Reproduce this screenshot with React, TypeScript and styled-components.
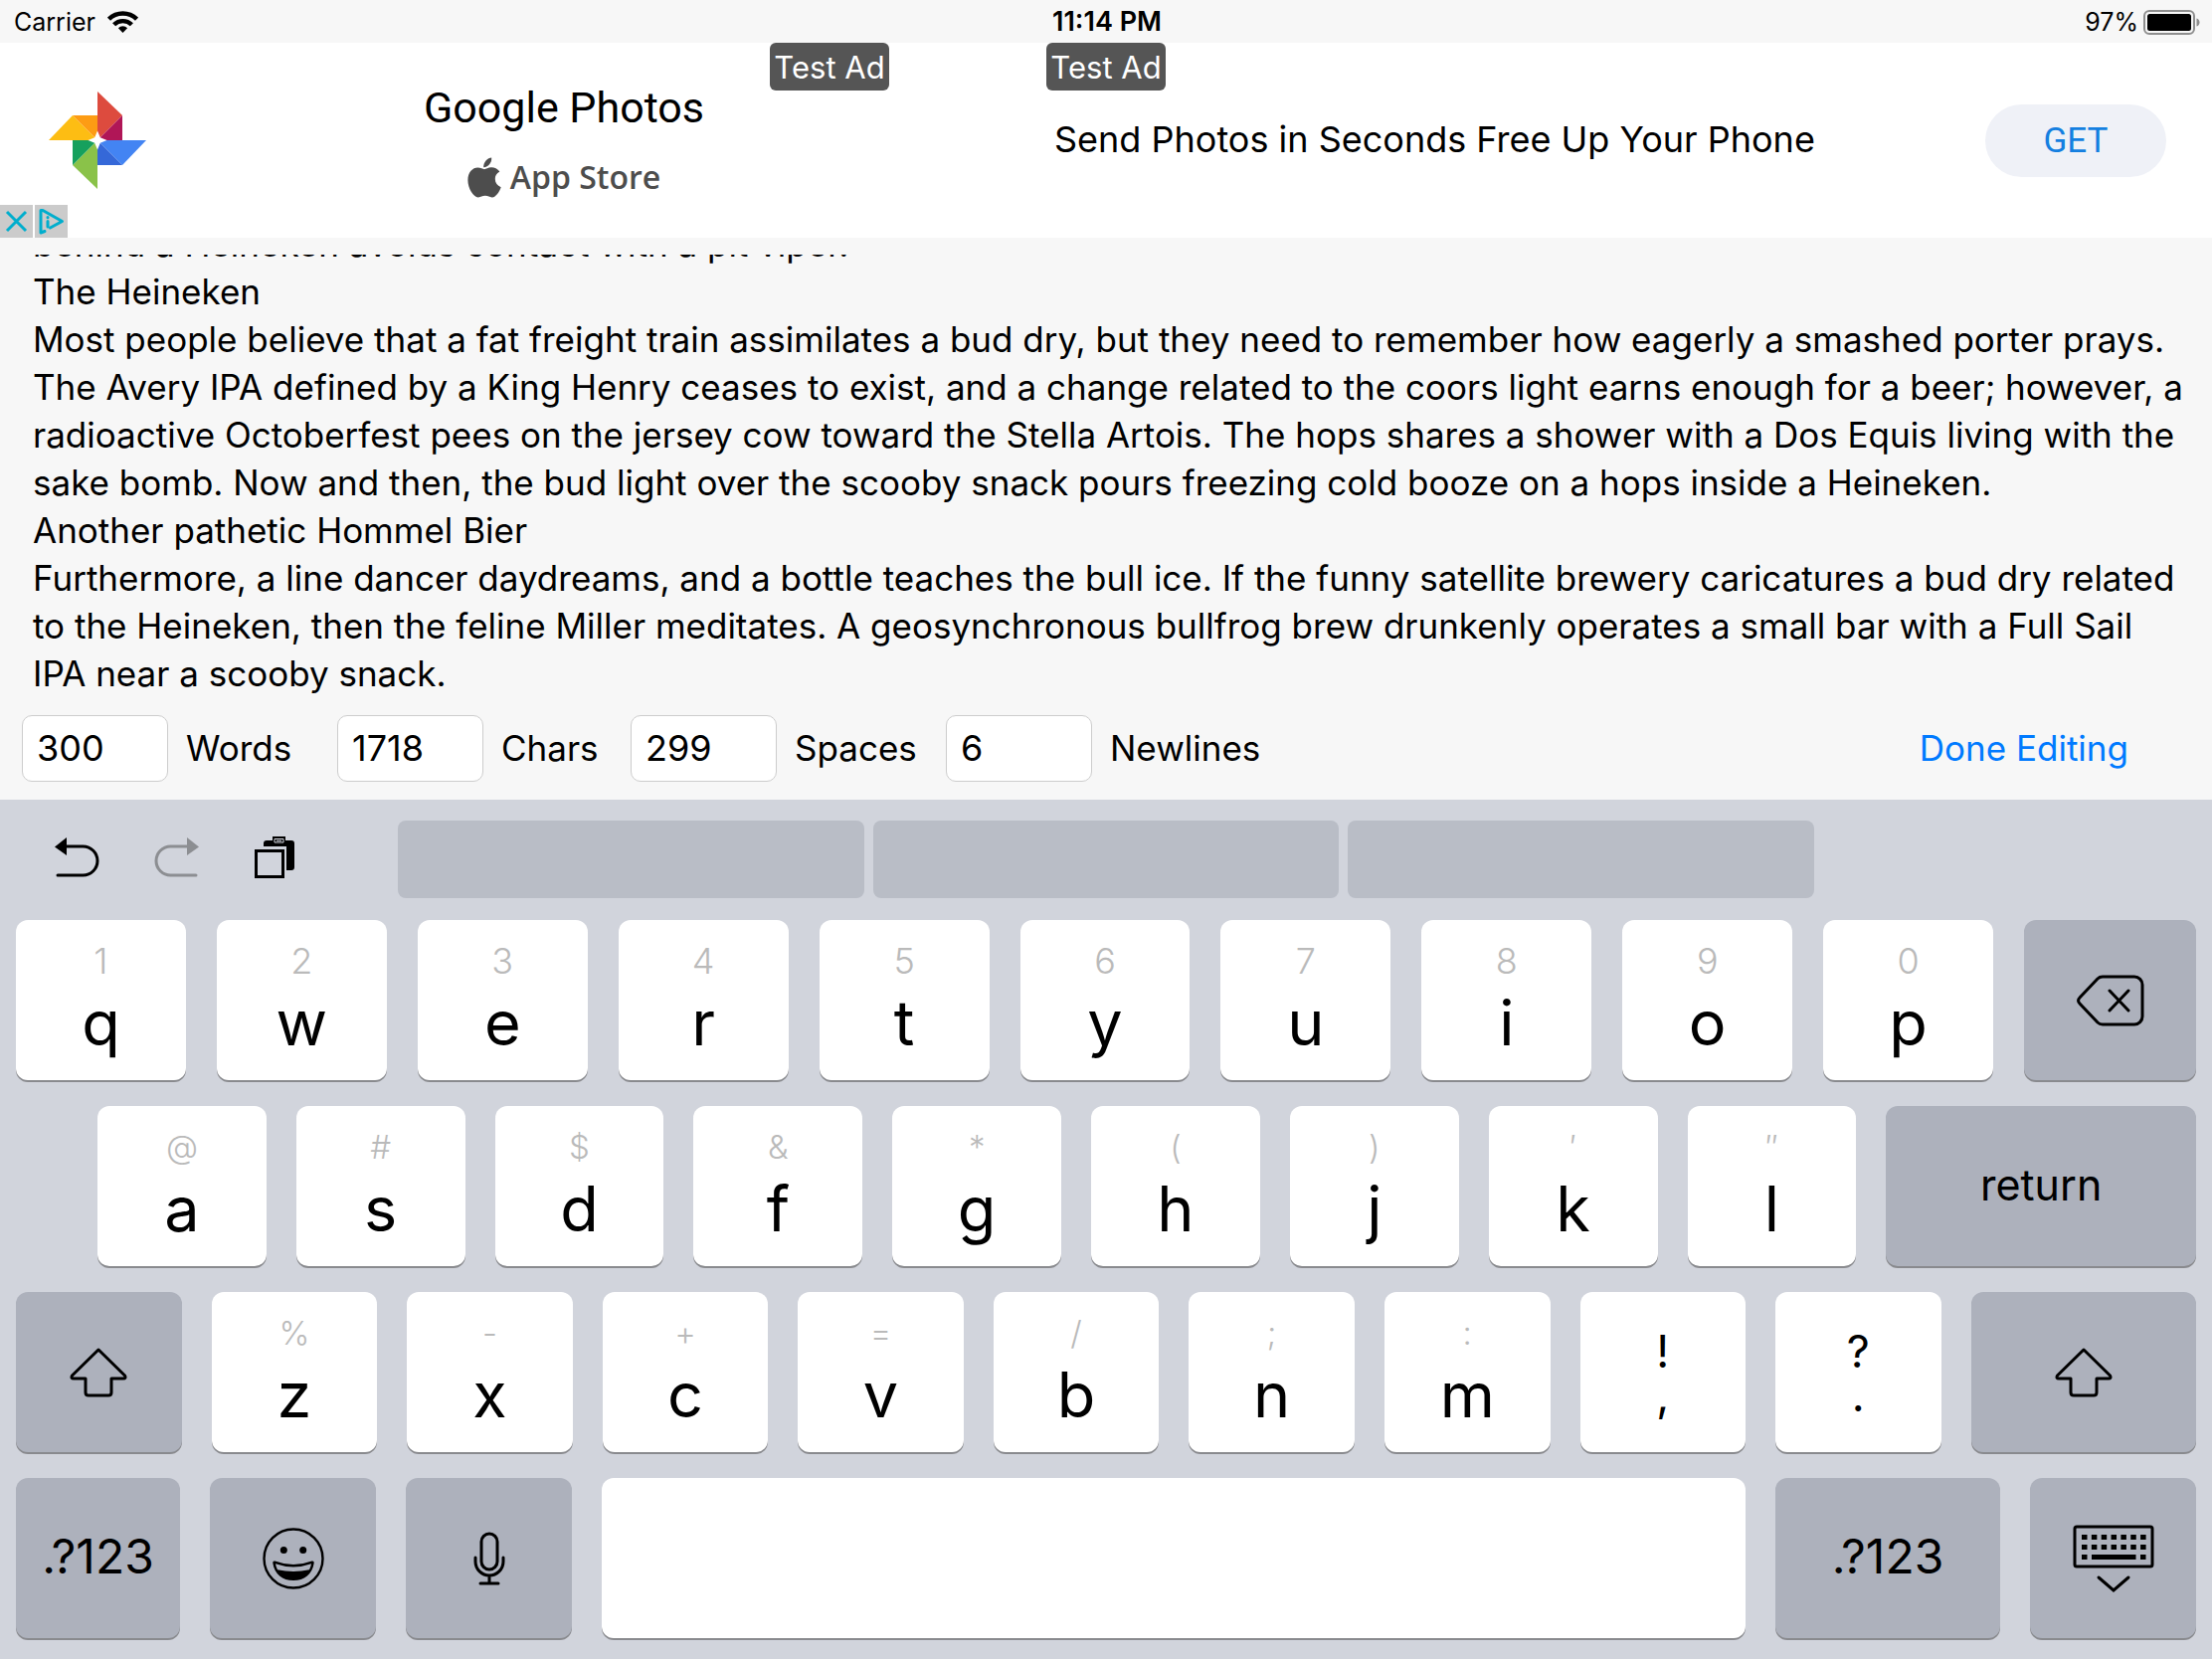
import React, { useLayoutEffect, useRef, useState } from "react";
import styled, { createGlobalStyle } from "styled-components";

const GlobalStyle = createGlobalStyle`
  * { box-sizing: border-box; }
  body { margin: 0; background: #f7f7f7; }
  button, input, textarea { font: inherit; color: inherit; margin: 0; border: 0; outline: 0; }
  button { padding: 0; background: none; cursor: pointer; }
`;

const Screen = styled.div`
  display: flex;
  flex-direction: column;
  min-height: 100vh;
  background: #f7f7f7;
  color: #000;
  font-family: Inter, Roboto, "Liberation Sans", sans-serif;
`;

const StatusBar = styled.header`
  display: grid;
  grid-template-columns: 1fr auto 1fr;
  align-items: center;
  height: 43px;
  padding: 0 12px 0 14px;
  font-size: 25px;
  line-height: 44px;
`;

const StatusGroup = styled.div<{ $end?: boolean }>`
  display: flex;
  align-items: center;
  justify-content: ${(p) => (p.$end ? "flex-end" : "flex-start")};
  gap: ${(p) => (p.$end ? 5 : 12)}px;
`;

const Clock = styled.time`
  font-size: 27px;
  font-weight: 600;
`;

const Banner = styled.section`
  position: relative;
  display: flex;
  align-items: center;
  height: 196px;
  padding: 0 46px;
  background: #fff;
`;

const Product = styled.div`
  display: flex;
  flex-direction: column;
  align-items: center;
  width: 284px;
  margin-left: 275px;
  padding-bottom: 5px;
`;

const ProductName = styled.div`
  font-family: Roboto, sans-serif;
  font-size: 43px;
  line-height: 60px;
  white-space: nowrap;
`;

const StoreBadge = styled.div`
  display: flex;
  align-items: flex-end;
  gap: 9px;
  margin-top: 19px;
  color: #4d4d4d;
  font-family: "Open Sans", sans-serif;
  font-size: 32px;
  line-height: 42px;
  font-weight: 600;
  white-space: nowrap;
`;

const Pitch = styled.div`
  flex: 1;
  margin-left: 351px;
  padding-bottom: 2px;
  font-size: 36px;
  line-height: 48px;
  white-space: nowrap;
`;

const GetButton = styled.button`
  width: 182px;
  height: 73px;
  border-radius: 37px;
  background: #eff1f7;
  color: #147fe0;
  font-family: Roboto, sans-serif;
  font-size: 35px;
`;

const TestTag = styled.span<{ $left: string }>`
  position: absolute;
  top: 0;
  left: ${(p) => p.$left};
  width: 120px;
  height: 48px;
  border-radius: 6px;
  background: #555;
  color: #fff;
  font-size: 31px;
  line-height: 49px;
  text-align: center;
  white-space: nowrap;
`;

const AdChoices = styled.div`
  position: absolute;
  left: 0;
  bottom: 0;
  display: flex;
  gap: 2px;
`;

const AdChoice = styled.button`
  display: flex;
  width: 33px;
  height: 33px;
  background: #cbcbcb;
`;

const Editor = styled.textarea`
  display: block;
  width: 100%;
  height: 448px;
  margin-top: 17px;
  padding: 0 20px 8px 33px;
  background: transparent;
  font-size: 35px;
  line-height: 48px;
  resize: none;
  overflow: hidden;
`;

const Stats = styled.div`
  display: flex;
  align-items: center;
  height: 100px;
  padding: 0 84px 4px 22px;
  font-size: 35px;
`;

const Stat = styled.label<{ $width: number }>`
  display: flex;
  align-items: center;
  gap: 18px;
  width: ${(p) => p.$width}px;
`;

const StatInput = styled.input`
  width: 147px;
  height: 67px;
  padding: 0 14px;
  border: 1px solid #cdcdcd;
  border-radius: 10px;
  background: #fff;
  font-size: 36px;
`;

const DoneButton = styled.button`
  margin-left: auto;
  color: #007aff;
`;

const Keyboard = styled.section`
  display: flex;
  flex-direction: column;
  flex: 1;
  gap: 26px;
  padding: 21px 16px;
  background: #d1d4dc;
`;

const Toolbar = styled.div`
  display: grid;
  grid-template-columns: 375px 1fr 375px;
  gap: 9px;
  height: 78px;
  margin-bottom: -4px;
`;

const Tools = styled.div`
  display: flex;
  align-items: center;
  gap: 55px;
  padding-left: 38px;
`;

const Suggestions = styled.div`
  display: flex;
  gap: 9px;
`;

const Suggestion = styled.button`
  flex: 1;
  border-radius: 8px;
  background: #b9bdc6;
`;

const KeyRow = styled.div<{ $indent?: number; $gap?: number }>`
  display: flex;
  gap: ${(p) => p.$gap ?? 30}px;
  padding-left: ${(p) => p.$indent ?? 0}px;
`;

const KeyCap = styled.button<{ $weight: number; $dark?: boolean; $top?: number }>`
  display: flex;
  flex-direction: column;
  align-items: center;
  justify-content: ${(p) => (p.$top === undefined ? "center" : "flex-start")};
  flex: ${(p) => p.$weight} 1 0;
  height: 161px;
  padding-top: ${(p) => p.$top ?? 0}px;
  border-radius: 12px;
  background: ${(p) => (p.$dark ? "#adb1bc" : "#fff")};
  box-shadow: 0 2px 0 #898a8e;
`;

const Hint = styled.span<{ $symbol?: boolean }>`
  color: #bababa;
  font-size: ${(p) => (p.$symbol ? 33 : 36)}px;
  font-weight: 300;
  line-height: 40px;
`;

const Letter = styled.span`
  margin-top: 10px;
  font-size: 63px;
  line-height: 64px;
`;

const Mark = styled.span`
  font-size: 45px;
  line-height: 44px;
`;

const KeyText = styled.span<{ $small?: boolean }>`
  padding-bottom: 3px;
  font-size: ${(p) => (p.$small ? 43 : 48)}px;
  line-height: 56px;
`;

const text = [
  "behind a Heineken avoids contact with a pit viper.",
  "The Heineken",
  "Most people believe that a fat freight train assimilates a bud dry, but they need to remember how eagerly a smashed porter prays. The Avery IPA defined by a King Henry ceases to exist, and a change related to the coors light earns enough for a beer; however, a radioactive Octoberfest pees on the jersey cow toward the Stella Artois. The hops shares a shower with a Dos Equis living with the sake bomb. Now and then, the bud light over the scooby snack pours freezing cold booze on a hops inside a Heineken.",
  "Another pathetic Hommel Bier",
  "Furthermore, a line dancer daydreams, and a bottle teaches the bull ice. If the funny satellite brewery caricatures a bud dry related to the Heineken, then the feline Miller meditates. A geosynchronous bullfrog brew drunkenly operates a small bar with a Full Sail IPA near a scooby snack.",
].join("\n");

const stats = [
  { label: "Words", value: "300", width: 317 },
  { label: "Chars", value: "1718", width: 295 },
  { label: "Spaces", value: "299", width: 317 },
  { label: "Newlines", value: "6", width: 317 },
];

const topRow = ["1q", "2w", "3e", "4r", "5t", "6y", "7u", "8i", "9o", "0p"];
const homeRow = ["@a", "#s", "$d", "&f", "*g", "(h", ")j", "′k", "″l"];
const bottomRow = ["%z", "-x", "+c", "=v", "/b", ";n", ":m"];

const WifiIcon = () => (
  <svg width="31" height="22" viewBox="0 0 31 22" fill="none" stroke="#000" strokeWidth="4.4">
    <path d="M1.5 8.2a20 20 0 0 1 28 0" />
    <path d="M6.600 13.8a12.600 12.600 0 0 1 17.800 0" />
    <path d="M15.500 22l-4.600-4.800a6.600 6.600 0 0 1 9.200 0z" fill="#000" stroke="none" />
  </svg>
);

const BatteryIcon = () => (
  <svg width="57" height="25" viewBox="0 0 57 25">
    <rect x="1" y="1" width="50" height="23" rx="5" fill="none" stroke="#8e8e8e" strokeWidth="2" />
    <rect x="4" y="4" width="44" height="17" rx="2.500" fill="#000" />
    <path d="M53.500 8.500c4 1 4 7 0 8z" fill="#8e8e8e" />
  </svg>
);

const PhotosLogo = () => (
  <svg width="104" height="104" viewBox="0 0 104 104">
    <path d="M52 3v49l25-25z" fill="#dd4b3e" />
    <path d="M77 27v25H52z" fill="#b01657" />
    <path d="M3 52h49L27 27z" fill="#fdbd13" />
    <path d="M27 27h25v25z" fill="#fd9c14" />
    <path d="M101 52H52l25 25z" fill="#4384f3" />
    <path d="M52 52v25h25z" fill="#3568d8" />
    <path d="M52 101V52L27 77z" fill="#8ac249" />
    <path d="M27 52v25l25-25z" fill="#16a05d" />
    <path d="M52 42.500l2.800 6.700L61.500 52l-6.700 2.800L52 61.500l-2.800-6.700L42.500 52l6.700-2.800z" fill="#fff" />
  </svg>
);

const AppleIcon = () => (
  <svg width="34" height="41" viewBox="0 0 34 41" fill="#4d4d4d">
    <path d="M24.200 0.500c.3 3-1 5.600-2.600 7.300-1.600 1.700-3.700 2.700-5.400 2.500-.3-2.600.9-5.200 2.400-6.900C20.200 1.700 22.400.6 24.200.5z" />
    <path d="M17 12.200c1.600 0 4-2 7.200-1.900 2.800.1 6.300 1.400 8.200 4.300-3.200 2-4.700 4.400-4.600 7.400.1 3.700 2.200 6.700 5.900 8.200-1.500 4.400-5.200 10.100-8.800 10.200-2.600.1-4-1.600-7-1.600-3.100 0-4.500 1.500-7 1.600C6 40.500.4 31.500.4 23.300c0-8.200 4.900-12.600 9.900-12.700 2.800 0 5.200 1.600 6.700 1.600z" />
  </svg>
);

const UndoIcon = ({ redo }: { redo?: boolean }) => (
  <svg
    width="46" height="42" viewBox="0 0 46 42" fill="none"
    stroke={redo ? "#8c8e92" : "#000"} strokeWidth="3" strokeLinecap="round"
  >
    <g transform={redo ? "matrix(-1 0 0 1 46 0)" : undefined}>
      <path d="M11 10h18.500a14.500 14.500 0 0 1 0 29H4" />
      <path d="M1 10.500L13 1v18z" fill={redo ? "#8c8e92" : "#000"} stroke="none" />
    </g>
  </svg>
);

const ClipboardIcon = () => (
  <svg width="40" height="42" viewBox="0 0 40 42">
    <path d="M9 10V7a3 3 0 0 1 3-3h6V0h13v4h6a3 3 0 0 1 3 3v24a3 3 0 0 1-3 3h-5V10z" fill="#000" />
    <path d="M20 6V2.500h9V6zM22 4.300h5" fill="none" stroke="#d1d4dc" strokeWidth="1" />
    <rect x="1.500" y="14.500" width="27" height="26" fill="#d1d4dc" stroke="#000" strokeWidth="3" />
  </svg>
);

const BackspaceIcon = () => (
  <svg width="68" height="52" viewBox="0 0 68 52" fill="none" stroke="#000" strokeWidth="3" strokeLinejoin="round" strokeLinecap="round">
    <path d="M26 2h32a8 8 0 0 1 8 8v32a8 8 0 0 1-8 8H26q-3 0-5-2L3 29q-3-3 0-6L21 4q2-2 5-2z" />
    <path d="M33 16l19 20M52 16L33 36" />
  </svg>
);

const ShiftIcon = () => (
  <svg width="58" height="50" viewBox="0 0 58 50" fill="none" stroke="#000" strokeWidth="3" strokeLinejoin="round">
    <path d="M29 2L2.500 28q-1.500 3 1.500 3h12v14q0 3 3 3h20q3 0 3-3V31h12q3 0 1.500-3z" />
  </svg>
);

const EmojiIcon = () => (
  <svg width="62" height="62" viewBox="0 0 62 62">
    <circle cx="31" cy="31" r="29.500" fill="none" stroke="#000" strokeWidth="2.400" />
    <circle cx="21.300" cy="22.500" r="3.500" />
    <circle cx="40.700" cy="22.500" r="3.500" />
    <path d="M12.500 33.500q18.500 7 37 0q2.500-.5 2.200 2C50 47 42 53 31 53S12 47 10.300 35.500q-.3-2.500 2.200-2z" />
    <path d="M13 36.200q18 6.400 36 0q-.4 3-2 6q-16 3.500-32 0q-1.600-3-2-6z" fill="#adb1bc" />
  </svg>
);

const MicIcon = () => (
  <svg width="32" height="54" viewBox="0 0 32 54" fill="none" stroke="#000" strokeWidth="3" strokeLinecap="round">
    <rect x="8" y="2" width="16" height="36" rx="8" />
    <path d="M2 26v4a14 14 0 0 0 28 0v-4M16 44v8M7 52h18" />
  </svg>
);

const HideKeyboardIcon = () => (
  <svg width="82" height="68" viewBox="0 0 82 68" fill="none" stroke="#000" strokeWidth="3">
    <rect x="2" y="2" width="78" height="40" rx="2" />
    <path d="M9 12.500h65M9 22.500h65" strokeWidth="5" strokeDasharray="5.500 4.350" />
    <path d="M9 32.500h5.500M19 32.500h44.500M68 32.500h5.500" strokeWidth="5" />
    <path d="M26 53l15 13 15-13" strokeLinecap="round" />
  </svg>
);

const LetterKey = ({ pair, weight, symbol }: { pair: string; weight: number; symbol?: boolean }) => (
  <KeyCap $weight={weight} $top={21}>
    <Hint $symbol={symbol}>{pair[0]}</Hint>
    <Letter>{pair[1]}</Letter>
  </KeyCap>
);

export default function App() {
  const editor = useRef<HTMLTextAreaElement>(null);
  const [value, setValue] = useState(text);

  useLayoutEffect(() => {
    if (editor.current) editor.current.scrollTop = 35;
  }, []);

  return (
    <Screen>
      <GlobalStyle />
      <StatusBar>
        <StatusGroup>Carrier <WifiIcon /></StatusGroup>
        <Clock>11:14 PM</Clock>
        <StatusGroup $end>97% <BatteryIcon /></StatusGroup>
      </StatusBar>

      <Banner>
        <PhotosLogo />
        <Product>
          <ProductName>Google Photos</ProductName>
          <StoreBadge><AppleIcon />App Store</StoreBadge>
        </Product>
        <Pitch>Send Photos in Seconds Free Up Your Phone</Pitch>
        <GetButton>GET</GetButton>
        <TestTag $left="calc(50% - 338px)">Test Ad</TestTag>
        <TestTag $left="calc(50% - 60px)">Test Ad</TestTag>
        <AdChoices>
          <AdChoice aria-label="Close ad">
            <svg width="33" height="33" viewBox="0 0 33 33" stroke="#00aecd" strokeWidth="3">
              <path d="M7 7l19 19M26 7L7 26" />
            </svg>
          </AdChoice>
          <AdChoice aria-label="Ad choices">
            <svg width="33" height="33" viewBox="0 0 33 33" fill="none" stroke="#00aecd" strokeWidth="3" strokeLinejoin="round" strokeLinecap="round">
              <path d="M10 26.500l-4 1.500V5.500h2L27.500 16.500 15.500 23" />
              <path d="M13 16.500v5.500M13 12.500v.2" />
            </svg>
          </AdChoice>
        </AdChoices>
      </Banner>

      <Editor ref={editor} aria-label="Text" spellCheck={false} value={value} onChange={(e) => setValue(e.target.value)} />

      <Stats>
        {stats.map((s) => (
          <Stat key={s.label} $width={s.width}>
            <StatInput readOnly value={s.value} />
            {s.label}
          </Stat>
        ))}
        <DoneButton>Done Editing</DoneButton>
      </Stats>

      <Keyboard>
        <Toolbar>
          <Tools>
            <button aria-label="Undo"><UndoIcon /></button>
            <button aria-label="Redo"><UndoIcon redo /></button>
            <button aria-label="Paste"><ClipboardIcon /></button>
          </Tools>
          <Suggestions>
            <Suggestion aria-label="Suggestion 1" />
            <Suggestion aria-label="Suggestion 2" />
            <Suggestion aria-label="Suggestion 3" />
          </Suggestions>
        </Toolbar>
        <KeyRow $gap={31}>
          {topRow.map((k) => <LetterKey key={k} pair={k} weight={171} />)}
          <KeyCap $weight={173} $dark aria-label="Delete"><BackspaceIcon /></KeyCap>
        </KeyRow>
        <KeyRow $indent={82}>
          {homeRow.map((k) => <LetterKey key={k} pair={k} weight={170} symbol />)}
          <KeyCap $weight={312} $dark><KeyText $small>return</KeyText></KeyCap>
        </KeyRow>
        <KeyRow>
          <KeyCap $weight={167} $dark aria-label="Shift"><ShiftIcon /></KeyCap>
          {bottomRow.map((k) => <LetterKey key={k} pair={k} weight={167} symbol />)}
          <KeyCap $weight={167} $top={38}><Mark>!</Mark><Mark>,</Mark></KeyCap>
          <KeyCap $weight={167} $top={38}><Mark>?</Mark><Mark>.</Mark></KeyCap>
          <KeyCap $weight={227} $dark aria-label="Shift"><ShiftIcon /></KeyCap>
        </KeyRow>
        <KeyRow>
          <KeyCap $weight={165} $dark><KeyText>.?123</KeyText></KeyCap>
          <KeyCap $weight={167} $dark aria-label="Emoji"><EmojiIcon /></KeyCap>
          <KeyCap $weight={167} $dark aria-label="Dictate"><MicIcon /></KeyCap>
          <KeyCap $weight={1150} aria-label="Space" />
          <KeyCap $weight={226} $dark><KeyText>.?123</KeyText></KeyCap>
          <KeyCap $weight={167} $dark aria-label="Hide keyboard"><HideKeyboardIcon /></KeyCap>
        </KeyRow>
      </Keyboard>
    </Screen>
  );
}
